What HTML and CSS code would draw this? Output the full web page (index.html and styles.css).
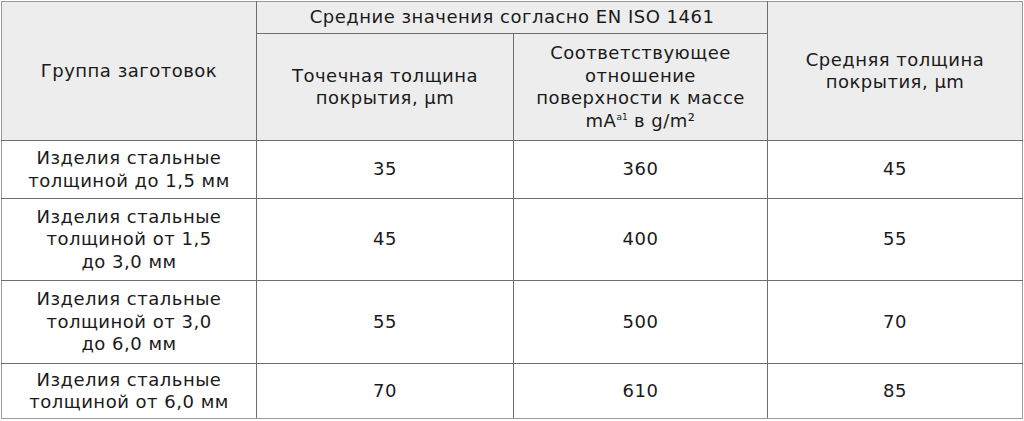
FILE: index.html
```html
<!DOCTYPE html>
<html lang="ru">
<head>
<meta charset="utf-8">
<title>Толщина покрытия</title>
<link rel="stylesheet" href="styles.css">
</head>
<body>
<table class="spec">
  <colgroup>
    <col class="c1"><col class="c2"><col class="c3"><col class="c4">
  </colgroup>
  <thead>
    <tr class="h1">
      <th rowspan="2">Группа заготовок</th>
      <th colspan="2">Средние значения согласно EN ISO 1461</th>
      <th rowspan="2">Средняя толщина<br>покрытия, µm</th>
    </tr>
    <tr class="h2">
      <th>Точечная толщина<br>покрытия, µm</th>
      <th>Соответствующее<br>отношение<br>поверхности к массе<br>mA<sup>a1</sup> в g/m²</th>
    </tr>
  </thead>
  <tbody>
    <tr class="r1">
      <td>Изделия стальные<br>толщиной до 1,5 мм</td><td>35</td><td>360</td><td>45</td>
    </tr>
    <tr class="r2">
      <td>Изделия стальные<br>толщиной от 1,5<br>до 3,0 мм</td><td>45</td><td>400</td><td>55</td>
    </tr>
    <tr class="r3">
      <td>Изделия стальные<br>толщиной от 3,0<br>до 6,0 мм</td><td>55</td><td>500</td><td>70</td>
    </tr>
    <tr class="r4">
      <td>Изделия стальные<br>толщиной от 6,0 мм</td><td>70</td><td>610</td><td>85</td>
    </tr>
  </tbody>
</table>
</body>
</html>
```

FILE: styles.css
```css
html, body {
  margin: 0;
  padding: 0;
  background: #ffffff;
}
body {
  padding: 1px 0 0 1px;
}
.spec {
  border-collapse: collapse;
  table-layout: fixed;
  width: 1021px;
  font-family: "DejaVu Sans", sans-serif;
  font-size: 18px;
  letter-spacing: 0.5px;
  line-height: 22.5px;
  color: #1a1a1a;
  border: 1px solid #9a9a9a;
}
.c1 { width: 255px; }
.c2 { width: 257px; }
.c3 { width: 254px; }
.c4 { width: 255px; }
.spec th,
.spec td {
  border: 1px solid #6e6e6e;
  padding: 0;
  text-align: center;
  vertical-align: middle;
  font-weight: normal;
}
.spec thead th {
  background: #ededed;
}
.spec tr > :first-child { border-left-color: #9a9a9a; }
.spec tr > :last-child { border-right-color: #9a9a9a; }
.spec thead .h1 th { border-top-color: #9a9a9a; }
.spec tbody .r4 td { border-bottom-color: #9a9a9a; }
.spec sup {
  font-size: 9px;
  letter-spacing: 0;
  line-height: 0;
  vertical-align: 7px;
}
.h1 { height: 32px; }
.h2 { height: 107px; }
.r1 { height: 58px; }
.r2 { height: 82px; }
.r3 { height: 83px; }
.r4 { height: 55px; }
```
